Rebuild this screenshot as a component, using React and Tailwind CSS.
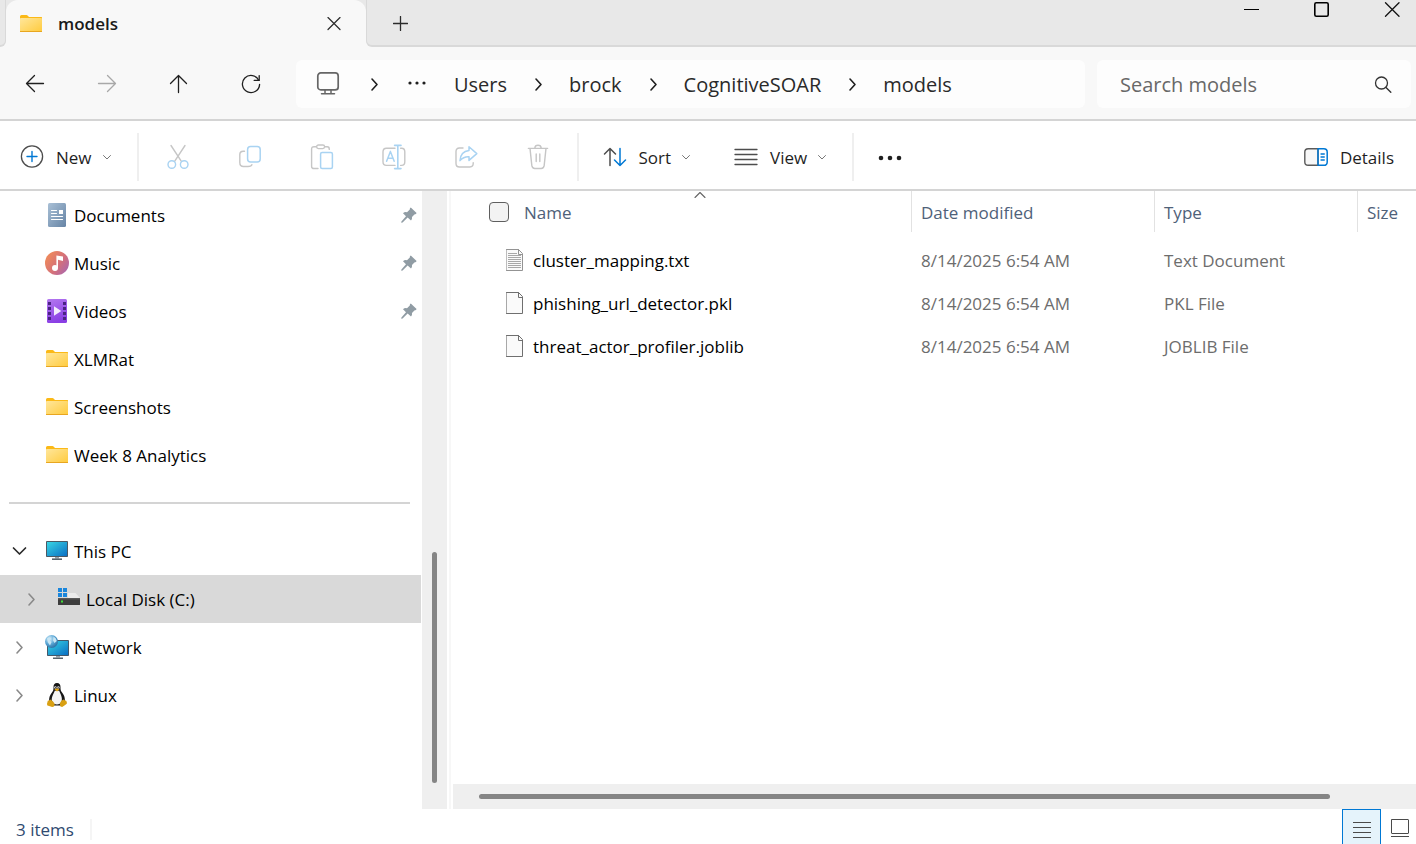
import React from "react";

/* ---------- icons ---------- */

function Svg({ w = 24, h = 24, children, className = "" }) {
  return (
    <svg
      width={w}
      height={h}
      viewBox={`0 0 ${w} ${h}`}
      fill="none"
      strokeLinecap="round"
      strokeLinejoin="round"
      className={`block shrink-0 ${className}`}
      aria-hidden="true"
    >
      {children}
    </svg>
  );
}

function FolderIcon() {
  return (
    <Svg>
      <defs>
        <linearGradient id="folder" x1="0" y1="0" x2="1" y2="1">
          <stop offset="0" stopColor="#ffe69b" />
          <stop offset="1" stopColor="#ffcb3d" />
        </linearGradient>
      </defs>
      <path d="M1 4.5Q1 3 2.5 3H7.5Q8.2 3 8.8 3.8L10 5H22.5Q23 5 23 5.6V8H1Z" fill="#fbb917" />
      <rect x="1" y="6" width="22" height="14" rx="0.8" fill="url(#folder)" />
      <path d="M1 19H23V19.4Q23 20 22.4 20H1.6Q1 20 1 19.4Z" fill="#e8a620" />
    </Svg>
  );
}

function DocumentsIcon() {
  return (
    <Svg>
      <defs>
        <linearGradient id="docs" x1="0" y1="0" x2="1" y2="1">
          <stop offset="0" stopColor="#a9c0d6" />
          <stop offset="1" stopColor="#6684a5" />
        </linearGradient>
      </defs>
      <rect x="3" y="0" width="18" height="24" rx="1.5" fill="url(#docs)" />
      <path d="M6.5 7.5h5M6.5 10.5h5M6.5 13.5h11M6.5 16.5h11" stroke="#fff" strokeWidth="1.2" />
      <rect x="14" y="7" width="4" height="4" fill="#fff" />
    </Svg>
  );
}

function MusicIcon() {
  return (
    <Svg>
      <defs>
        <linearGradient id="music" x1="0" y1="0.2" x2="1" y2="0.9">
          <stop offset="0" stopColor="#f18c58" />
          <stop offset="0.55" stopColor="#d4707a" />
          <stop offset="1" stopColor="#a566b4" />
        </linearGradient>
      </defs>
      <circle cx="12" cy="12" r="12" fill="url(#music)" />
      <circle cx="10" cy="17" r="3" fill="#fff" />
      <path d="M11.4 4.4 18 5.6V10L13 8.8V17H11.4Z" fill="#fff" />
    </Svg>
  );
}

function VideosIcon() {
  return (
    <Svg>
      <defs>
        <linearGradient id="video" x1="0" y1="0" x2="0.3" y2="1">
          <stop offset="0" stopColor="#b478f0" />
          <stop offset="1" stopColor="#8a3fe4" />
        </linearGradient>
      </defs>
      <rect x="2" y="0" width="20" height="24" rx="1.5" fill="url(#video)" />
      {[3, 8, 13, 18].map((y) => (
        <g key={y} fill="#4a2382">
          <rect x="3" y={y} width="3" height="3" />
          <rect x="18" y={y} width="3" height="3" />
        </g>
      ))}
      <path d="M9 7.2 16.3 12 9 16.8Z" fill="#f3ebfd" />
    </Svg>
  );
}

function ScreenGradient({ id }) {
  return (
    <linearGradient id={id} x1="0" y1="0" x2="1" y2="1">
      <stop offset="0" stopColor="#38d5e4" />
      <stop offset="1" stopColor="#0b6fc4" />
    </linearGradient>
  );
}

function ThisPcIcon() {
  return (
    <Svg>
      <defs>
        <ScreenGradient id="pc" />
      </defs>
      <rect x="1" y="2" width="22" height="16" rx="0.8" fill="#4b5965" />
      <rect x="2" y="3" width="20" height="14" fill="url(#pc)" />
      <path d="M10 18h4v1.6h-4Z" fill="#9aa4ac" />
      <path d="M7 19.4h10V21H7Z" fill="#56626c" />
    </Svg>
  );
}

function DiskIcon() {
  return (
    <Svg>
      <path d="M5 6H18.5L23 11H1Z" fill="#ececec" />
      <rect x="1" y="11" width="22" height="7" rx="0.6" fill="#3d3d3d" />
      <path d="M1 11h22v1.5H1Z" fill="#5a5a5a" />
      <rect x="4" y="13.5" width="2" height="2" fill="#3ee03a" />
      <rect x="0" y="0" width="11" height="11" fill="#d9d9d9" />
      <path d="M1 1h4v4H1ZM6 1h4v4H6ZM1 6h4v4H1ZM6 6h4v4H6Z" fill="#1a86dc" />
    </Svg>
  );
}

function NetworkIcon() {
  return (
    <Svg>
      <defs>
        <ScreenGradient id="net" />
        <radialGradient id="globe" cx="0.35" cy="0.3" r="0.8">
          <stop offset="0" stopColor="#d9f0fb" />
          <stop offset="0.5" stopColor="#5aa7d6" />
          <stop offset="1" stopColor="#25659a" />
        </radialGradient>
      </defs>
      <rect x="2" y="5" width="22" height="16" rx="0.8" fill="#44586a" />
      <rect x="3" y="6" width="20" height="14" fill="url(#net)" />
      <path d="M11 21h4v1.5h-4Z" fill="#9aa4ac" />
      <path d="M8 22.5h10V24H8Z" fill="#56626c" />
      <circle cx="6.5" cy="6.5" r="6.5" fill="url(#globe)" />
      <path d="M2 3.5Q4.5 1.5 6 3.2L4.8 5.5 6.5 7 5 10.5 3 7.5ZM8.5 1.5Q11.5 3 11.8 6L9.5 8 8 5.5Z" fill="#c9e6f4" />
    </Svg>
  );
}

function LinuxIcon() {
  return (
    <Svg>
      <path
        d="M12 0C9.5 0 8.4 1.9 8.5 4.2 8.6 6.8 8.2 8 6.4 10.2 4.8 12.2 3.8 15 4.2 18.5L8 22.5H16L19.8 18.5C20.2 15 19.2 12.2 17.6 10.2 15.8 8 15.4 6.8 15.5 4.2 15.6 1.9 14.5 0 12 0Z"
        fill="#161616"
      />
      <path d="M9.8 7.8C8.8 10.8 6.4 13.5 6.8 17.5 8.2 20.8 10 21.5 12 21.5S15.8 20.5 16.8 17.5C17.4 13.5 15.2 10.8 14.2 7.8Z" fill="#f4f4f4" />
      <circle cx="10.4" cy="4.4" r="1.2" fill="#e9e9e9" />
      <circle cx="13.4" cy="4.4" r="1.2" fill="#e9e9e9" />
      <circle cx="10.6" cy="4.5" r="0.5" fill="#111" />
      <circle cx="13.2" cy="4.5" r="0.5" fill="#111" />
      <path d="M9.4 6.4 12 5.2 14.5 6.4 12 8.6Z" fill="#e0a415" />
      <path d="M2.8 17.8Q4.8 17.4 5.6 16.4 8.8 18.5 9.8 21.4 9.4 24 7.2 24 5 23.2 2.4 22.6 1.6 21 2.8 17.8Z" fill="#d9a012" />
      <path d="M21.2 17.8Q19.2 17.4 18.6 16.4 15.4 17.5 14.8 21.4 15 24 17.2 24 19.4 22.8 21.8 20.8 22.2 19.4 21.2 17.8Z" fill="#d9a012" />
    </Svg>
  );
}

function PinIcon() {
  return (
    <Svg w={16} h={16}>
      <path
        d="M9.8 0.4 15.6 6Q15.4 7.2 13.4 7.4L11 10Q11.4 12.4 10 13.6L6.6 10.6 1.6 15.6 0.2 15.8 0.4 14.4 5 9.2 2 6.2Q3.4 4.8 6 5.2L8.8 2.6Q8.6 1 9.8 0.4Z"
        fill="#909ca4"
      />
    </Svg>
  );
}

function ChevronRight({ color = "#1f1f1f", width = 1.6 }) {
  return (
    <Svg w={12} h={16}>
      <path d="M4 3 9 8.5 4 14" stroke={color} strokeWidth={width} />
    </Svg>
  );
}

function ChevronDown() {
  return (
    <Svg w={16} h={12}>
      <path d="M2.5 3 8.5 9 14.5 3" stroke="#2b2b2b" strokeWidth="1.7" />
    </Svg>
  );
}

function SmallChevron() {
  return (
    <Svg w={10} h={8}>
      <path d="M1.5 2.5 5 6 8.5 2.5" stroke="#777" />
    </Svg>
  );
}

function FileIcon({ lined }) {
  return (
    <Svg w={18} h={24}>
      <path
        d="M0.5 0.5H12.5L16.5 4.5V21.5H0.5Z"
        fill="#fafafa"
        stroke={lined ? "#939393" : "#6f6f6f"}
        strokeLinejoin="miter"
      />
      <path d="M12.5 0.5V5.5H16.5" stroke={lined ? "#939393" : "#6f6f6f"} />
      {lined && (
        <path
          d="M2 4.5h9M2 6.5h13M2 8.5h13M2 10.5h13M2 12.5h13M2 14.5h13M2 16.5h13M2 18.5h13"
          stroke="#a8a8a8"
          strokeLinecap="butt"
        />
      )}
    </Svg>
  );
}

/* ---------- window parts ---------- */

function TabStrip() {
  return (
    <header className="flex h-[47px] shrink-0 bg-[#f8f8f8]">
      <div className="w-1.5 shrink-0 rounded-br-[6px] border-r border-b-2 border-[#d9d9d9] bg-[#e8e8e8]" />
      <div className="w-[360px] shrink-0 bg-[#e8e8e8]">
        <div className="flex h-full items-center rounded-t-[12px] bg-[#f8f8f8] pr-5 pl-[13px]">
          <FolderIcon />
          <h1 className="ml-[15px] flex-1 text-[17px] font-semibold text-[#1a1a1a]">models</h1>
          <button aria-label="Close tab" className="flex h-6 w-6 items-center justify-center">
            <Svg w={14} h={14}>
              <path d="M1 0.5 13 12.5M13 0.5 1 12.5" stroke="#2b2b2b" strokeWidth="1.2" />
            </Svg>
          </button>
        </div>
      </div>
      <div className="flex min-w-0 flex-1 items-start justify-between rounded-bl-[6px] border-b-2 border-l border-[#d9d9d9] bg-[#e8e8e8] pl-[21px]">
        <button aria-label="New tab" className="flex h-[47px] w-6 items-center justify-center">
          <Svg w={15} h={15}>
            <path d="M7.5 0.5V14.5M0.5 7.5H14.5" stroke="#2b2b2b" strokeWidth="1.3" />
          </Svg>
        </button>
        <div className="flex gap-[22px]">
          <button aria-label="Minimize" className="flex h-[19px] w-12 items-center justify-center">
            <Svg w={16} h={15}>
              <path d="M0 7.5H15" stroke="#000" strokeLinecap="butt" />
            </Svg>
          </button>
          <button aria-label="Maximize" className="flex h-[19px] w-12 items-center justify-center">
            <Svg w={16} h={15}>
              <rect x="0.8" y="0.8" width="13.4" height="13.4" rx="1.5" stroke="#000" strokeWidth="1.6" />
            </Svg>
          </button>
          <button aria-label="Close" className="flex h-[19px] w-12 items-center justify-center">
            <Svg w={16} h={15}>
              <path d="M1.5 0.8 15 14.2M15 0.8 1.5 14.2" stroke="#111" strokeWidth="1.3" />
            </Svg>
          </button>
        </div>
      </div>
    </header>
  );
}

function NavButton({ label, disabled, children }) {
  return (
    <button aria-label={label} disabled={disabled} className="flex h-12 w-12 items-center justify-center">
      {children}
    </button>
  );
}

function Crumb({ children }) {
  return (
    <a href="#" className="pt-0.5 text-[20px] leading-7 text-[#2a2a2a]">
      {children}
    </a>
  );
}

function CrumbChevron() {
  return (
    <span className="flex w-[62px] justify-center">
      <ChevronRight />
    </span>
  );
}

function NavBar() {
  return (
    <div className="flex h-[74px] shrink-0 items-center border-b-2 border-[#d4d4d4] bg-[#f8f8f8] pt-0.5 pr-[5px] pl-[11px]">
      <div className="flex gap-6">
        <NavButton label="Back">
          <Svg>
            <path d="M20.5 11.5H3.5M11.5 3.5 3.5 11.5 11.5 19.5" stroke="#1f1f1f" strokeWidth="1.3" />
          </Svg>
        </NavButton>
        <NavButton label="Forward" disabled>
          <Svg>
            <path d="M3.5 11.5H20.5M12.5 3.5 20.5 11.5 12.5 19.5" stroke="#a8a8a8" strokeWidth="1.3" />
          </Svg>
        </NavButton>
        <NavButton label="Up">
          <Svg>
            <path d="M11.5 20.5V3.5M3.5 11.5 11.5 3.5 19.5 11.5" stroke="#1f1f1f" strokeWidth="1.3" />
          </Svg>
        </NavButton>
        <NavButton label="Refresh">
          <Svg>
            <path d="M19.8 8.4A8.6 8.6 0 1 0 20.6 12.4" stroke="#1f1f1f" strokeWidth="1.3" />
            <path d="M20.2 3.6V8.4H15.2" stroke="#1f1f1f" strokeWidth="1.3" />
          </Svg>
        </NavButton>
      </div>
      <nav
        aria-label="Address"
        className="ml-[21px] flex h-12 min-w-0 flex-1 items-center rounded-[6px] bg-[#fdfdfd] pl-5"
      >
        <Svg>
          <rect x="1.8" y="0.9" width="20.4" height="17" rx="3" stroke="#666" strokeWidth="1.7" />
          <path d="M9 18V21.3M15 18V21.3M5.5 21.8H18.5" stroke="#666" strokeWidth="1.5" />
        </Svg>
        <span className="flex w-[68px] justify-center">
          <ChevronRight />
        </span>
        <button aria-label="More folders" className="mr-7 flex h-6 w-[18px] items-center justify-center">
          <Svg w={18} h={4} className="mb-0.5">
            <circle cx="2" cy="2" r="1.6" fill="#1f1f1f" />
            <circle cx="9" cy="2" r="1.6" fill="#1f1f1f" />
            <circle cx="16" cy="2" r="1.6" fill="#1f1f1f" />
          </Svg>
        </button>
        <Crumb>Users</Crumb>
        <CrumbChevron />
        <Crumb>brock</Crumb>
        <CrumbChevron />
        <Crumb>CognitiveSOAR</Crumb>
        <CrumbChevron />
        <Crumb>models</Crumb>
      </nav>
      <label className="ml-3 flex h-12 w-[314px] items-center rounded-[6px] bg-[#fdfdfd] pr-[19px] pl-[23px]">
        <input
          type="text"
          aria-label="Search models"
          placeholder="Search models"
          className="min-w-0 flex-1 bg-transparent pt-0.5 text-[20px] leading-7 outline-none placeholder:text-[#686868]"
        />
        <Svg w={18} h={18}>
          <circle cx="7.5" cy="8" r="6" stroke="#333" strokeWidth="1.3" />
          <path d="M12 12.5 16.8 17.3" stroke="#333" strokeWidth="1.4" />
        </Svg>
      </label>
    </div>
  );
}

function IconCommand({ label, children }) {
  return (
    <button aria-label={label} disabled className="flex h-12 w-12 items-center justify-center">
      <Svg w={24} h={26}>
        {children}
      </Svg>
    </button>
  );
}

function Divider() {
  return <span className="h-12 w-0.5 shrink-0 bg-[#efefef]" />;
}

function TextCommand({ icon, children, chevron = true }) {
  return (
    <button className="flex h-12 items-center text-[17px] leading-6 text-[#1f1f1f]">
      {icon}
      <span className="ml-3 pt-0.5">{children}</span>
      {chevron && (
        <span className="ml-[10px]">
          <SmallChevron />
        </span>
      )}
    </button>
  );
}

const GREY = "#c6c6c6";
const BLUE = "#a9d3f2";

function CommandBar() {
  return (
    <div className="flex h-[70px] shrink-0 items-center border-b-2 border-[#d4d4d4] bg-white pt-1 pr-[22px] pl-5">
      <TextCommand
        icon={
          <Svg>
            <circle cx="12" cy="11.5" r="10.6" stroke="#4d4d4d" strokeWidth="1.3" />
            <path d="M12 6.5V16.5M7 11.5H17" stroke="#0078d4" strokeWidth="1.4" />
          </Svg>
        }
      >
        New
      </TextCommand>
      <span className="w-[25px]" />
      <Divider />
      <div className="ml-[15px] flex gap-6">
        <IconCommand label="Cut">
          <path d="M5 1.5 15.4 17.4M19 1.5 8.6 17.4" stroke={GREY} strokeWidth="1.4" />
          <circle cx="5.8" cy="20.5" r="3.8" stroke={BLUE} strokeWidth="1.4" />
          <circle cx="18.2" cy="20.5" r="3.8" stroke={BLUE} strokeWidth="1.4" />
        </IconCommand>
        <IconCommand label="Copy">
          <path d="M6.5 7.2H5.2Q1.8 7.2 1.8 10.5V18.5Q1.8 22.5 5.5 22.5H10Q13.5 22.5 13.9 20.6" stroke={GREY} strokeWidth="1.4" />
          <rect x="9.6" y="2.6" width="12.6" height="15.4" rx="3" stroke={BLUE} strokeWidth="1.5" />
        </IconCommand>
        <IconCommand label="Paste">
          <path d="M6.5 2.8H4Q1.6 2.8 1.6 5V22.4Q1.6 24.5 4 24.5H8M15 2.8H17.3Q19.3 2.8 19.3 5.4" stroke={GREY} strokeWidth="1.4" />
          <rect x="6.6" y="1" width="8" height="3.6" rx="1.8" stroke={GREY} strokeWidth="1.3" />
          <rect x="10.6" y="8.6" width="11.8" height="16" rx="1.5" stroke={BLUE} strokeWidth="1.5" />
        </IconCommand>
        <IconCommand label="Rename">
          <path d="M13 4.2H4.4Q1 4.2 1 7.8V17.8Q1 21.4 4.4 21.4H13M18.6 4.2H19.6Q22.8 4.2 22.8 7.8V17.8Q22.8 21.4 19.6 21.4H18.6" stroke={GREY} strokeWidth="1.4" />
          <path d="M4.6 17.2 8.4 7.4 12.2 17.2M5.8 14.2H11" stroke={BLUE} strokeWidth="1.5" />
          <path d="M15.8 1.5V24.5M12.6 1.4H19M12.6 24.6H19" stroke={BLUE} strokeWidth="1.6" />
        </IconCommand>
        <IconCommand label="Share">
          <path d="M9 4H5.4Q2 4 2 7.5V19.5Q2 23 5.4 23H15.9Q19.2 23 19.2 19.6V18.6" stroke={GREY} strokeWidth="1.4" />
          <path d="M15 2.8 22.8 9.6 15 16.4V12.8Q9.8 12.4 6 16.6 6.6 7.6 15 6.6Z" stroke={BLUE} strokeWidth="1.5" />
        </IconCommand>
        <IconCommand label="Delete">
          <path d="M2.4 4.4H21.6M4 4.4 5.8 21.4Q6.2 24.5 8.8 24.5H15.2Q17.8 24.5 18.2 21.4L20 4.4M8.8 4Q9 1.2 12 1.2T15.2 4M10.2 10V17.6M13.8 10V17.6" stroke={GREY} strokeWidth="1.4" />
        </IconCommand>
      </div>
      <span className="w-[15px]" />
      <Divider />
      <span className="w-6" />
      <TextCommand
        icon={
          <Svg>
            <path d="M7 20.5V3.5M1.5 9 7 3.5 12.5 9" stroke="#4d4d4d" strokeWidth="1.5" />
            <path d="M17 3.5V20.5M11.5 15 17 20.5 22.5 15" stroke="#0078d4" strokeWidth="1.5" />
          </Svg>
        }
      >
        Sort
      </TextCommand>
      <span className="w-[43px]" />
      <TextCommand
        icon={
          <Svg>
            <path d="M1 4.5H23M1 9.5H23M1 14.5H23M1 19.5H23" stroke="#4d4d4d" strokeWidth="1.3" />
          </Svg>
        }
      >
        View
      </TextCommand>
      <span className="w-[25px]" />
      <Divider />
      <button aria-label="See more" className="ml-3 flex h-12 w-12 items-center justify-center">
        <Svg w={26} h={8}>
          <circle cx="4" cy="5" r="2.3" fill="#1f1f1f" />
          <circle cx="13" cy="5" r="2.3" fill="#1f1f1f" />
          <circle cx="22" cy="5" r="2.3" fill="#1f1f1f" />
        </Svg>
      </button>
      <span className="flex-1" />
      <TextCommand
        chevron={false}
        icon={
          <Svg>
            <path d="M14 3.7H4.2Q0.8 3.7 0.8 7.1V16.9Q0.8 20.3 4.2 20.3H14Z" fill="#f7f7f7" stroke="#5a5a5a" strokeWidth="1.4" />
            <path d="M14 3.7H19.8Q23.2 3.7 23.2 7.1V16.9Q23.2 20.3 19.8 20.3H14Z" stroke="#0078d4" strokeWidth="1.5" />
            <path d="M17 9H20.3M17 12H20.3M17 15H20.3" stroke="#0078d4" strokeWidth="1.3" />
          </Svg>
        }
      >
        Details
      </TextCommand>
    </div>
  );
}

/* ---------- navigation pane ---------- */

const QUICK_ACCESS = [
  { name: "Documents", Icon: DocumentsIcon, pinned: true },
  { name: "Music", Icon: MusicIcon, pinned: true },
  { name: "Videos", Icon: VideosIcon, pinned: true },
  { name: "XLMRat", Icon: FolderIcon },
  { name: "Screenshots", Icon: FolderIcon },
  { name: "Week 8 Analytics", Icon: FolderIcon },
];

const DEVICES = [
  { name: "This PC", Icon: ThisPcIcon, state: "open" },
  { name: "Local Disk (C:)", Icon: DiskIcon, state: "closed", nested: true, selected: true },
  { name: "Network", Icon: NetworkIcon, state: "closed" },
  { name: "Linux", Icon: LinuxIcon, state: "closed" },
];

function TreeRow({ name, Icon, pinned, state, nested, selected }) {
  return (
    <li>
      <button
        className={`flex h-12 w-full items-center pr-1 text-left text-[17px] leading-6 text-black ${
          nested ? "pl-[19px]" : "pl-[7px]"
        } ${selected ? "bg-[#d9d9d9]" : ""}`}
      >
        <span className="mr-[14px] flex w-6 shrink-0 justify-center">
          {state === "open" && <ChevronDown />}
          {state === "closed" && <ChevronRight color="#8a8a8a" />}
        </span>
        <Icon />
        <span className="ml-[5px] flex-1 pt-0.5">{name}</span>
        {pinned && <PinIcon />}
      </button>
    </li>
  );
}

function NavigationPane() {
  return (
    <aside className="flex shrink-0">
      <div className="mr-px w-[421px] overflow-hidden">
        <ul>
          {QUICK_ACCESS.map((item) => (
            <TreeRow key={item.name} {...item} />
          ))}
        </ul>
        <div className="flex h-12 items-center pr-[11px] pl-[9px]">
          <hr className="w-full border-t-2 border-[#d4d4d4]" />
        </div>
        <ul>
          {DEVICES.map((item) => (
            <TreeRow key={item.name} {...item} />
          ))}
        </ul>
      </div>
      <div className="flex w-[25px] flex-col items-center justify-end bg-[#efefef] pb-[26px]">
        <div className="h-[231px] w-[5px] rounded-full bg-[#858585]" />
      </div>
      <div className="mx-0.5 w-0.5 bg-[#f7f7f7]" />
    </aside>
  );
}

/* ---------- file list ---------- */

const FILES = [
  { name: "cluster_mapping.txt", modified: "8/14/2025 6:54 AM", type: "Text Document", lined: true },
  { name: "phishing_url_detector.pkl", modified: "8/14/2025 6:54 AM", type: "PKL File" },
  { name: "threat_actor_profiler.joblib", modified: "8/14/2025 6:54 AM", type: "JOBLIB File" },
];

function HeaderCell({ children }) {
  return (
    <th className="p-0 align-top font-normal">
      <div className="flex h-[41px] items-center border-l border-[#e2e2e2] pt-0.5 pl-[9px]">{children}</div>
    </th>
  );
}

function FileList() {
  return (
    <main className="flex min-w-0 flex-1 flex-col">
      <div className="min-h-0 flex-1 overflow-hidden">
        <table className="w-full table-fixed border-collapse text-left text-[17px] leading-6">
          <colgroup>
            <col />
            <col className="w-[243px]" />
            <col className="w-[203px]" />
            <col className="w-[59px]" />
          </colgroup>
          <thead>
            <tr className="h-12 text-[#4f6179]">
              <th className="p-0 pl-9 align-top font-normal">
                <div className="relative flex h-[41px] items-center">
                  <input
                    type="checkbox"
                    aria-label="Select all"
                    className="h-5 w-5 appearance-none rounded-[4px] border border-[#5f5f5f] bg-[#f3f3f3]"
                  />
                  <span className="ml-[15px] pt-0.5">Name</span>
                  <span className="absolute inset-x-0 top-0 flex justify-center">
                    <Svg w={14} h={8}>
                      <path d="M2 6.5 7 1.5 12 6.5" stroke="#666" strokeWidth="1.1" />
                    </Svg>
                  </span>
                </div>
              </th>
              <HeaderCell>Date modified</HeaderCell>
              <HeaderCell>Type</HeaderCell>
              <HeaderCell>Size</HeaderCell>
            </tr>
          </thead>
          <tbody>
            {FILES.map((file) => (
              <tr key={file.name} className="h-[43px] text-[#6d6d6d]">
                <td className="p-0 pl-[53px]">
                  <a href="#" className="flex items-center gap-[9px] text-black">
                    <FileIcon lined={file.lined} />
                    {file.name}
                  </a>
                </td>
                <td className="p-0 pl-[10px]">{file.modified}</td>
                <td className="p-0 pl-[10px]">{file.type}</td>
                <td />
              </tr>
            ))}
          </tbody>
        </table>
      </div>
      <div className="flex h-[25px] shrink-0 items-center bg-[#efefef] pr-[86px] pl-[26px]">
        <div className="h-[5px] flex-1 rounded-full bg-[#858585]" />
      </div>
    </main>
  );
}

function StatusBar() {
  return (
    <footer className="flex h-[35px] shrink-0 items-stretch bg-white">
      <div className="flex flex-1 items-center pt-1.5 pl-4 text-[17px] leading-6 text-[#2f4a70]">
        3 items
        <span className="ml-4 h-[21px] w-0.5 bg-[#f5f5f5]" />
      </div>
      <button
        aria-label="Details view"
        className="flex w-[39px] items-start justify-center border border-b-0 border-[#0078d4] bg-[#e5f3fb] pt-3 pl-px"
      >
        <Svg w={18} h={16}>
          <path d="M0 0.5H18M0 5.5H18M0 10.5H18M0 15.5H18" stroke="#4a4a4a" strokeLinecap="butt" />
        </Svg>
      </button>
      <button aria-label="Large icons view" className="flex w-[35px] items-start justify-center pt-[10px] pl-[3px]">
        <Svg w={18} h={18}>
          <rect x="0.5" y="0.5" width="17" height="14" rx="0.5" stroke="#4a4a4a" />
          <path d="M0 17.5H18" stroke="#4a4a4a" strokeLinecap="butt" />
        </Svg>
      </button>
    </footer>
  );
}

export default function App() {
  return (
    <div className="flex h-screen flex-col overflow-hidden bg-white font-['Open_Sans','Noto_Sans',sans-serif]">
      <TabStrip />
      <NavBar />
      <CommandBar />
      <div className="flex min-h-0 flex-1">
        <NavigationPane />
        <FileList />
      </div>
      <StatusBar />
    </div>
  );
}
